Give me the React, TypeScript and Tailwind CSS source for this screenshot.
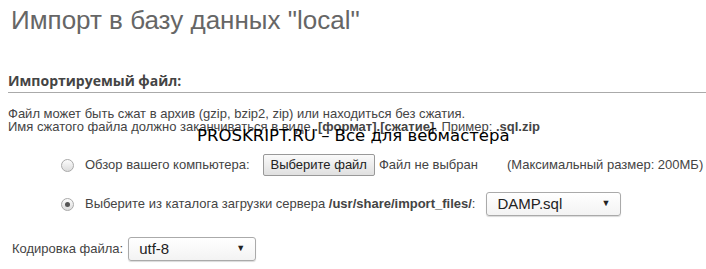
import React from "react";

function Radio({ checked }: { checked?: boolean }) {
    return (
        <span className="relative inline-block h-[13px] w-[13px] shrink-0 rounded-full border border-[#a9a9a9] bg-gradient-to-b from-[#fcfcfc] to-[#dcdcdc]">
            {checked && (
                <span className="absolute left-[3px] top-[3px] h-[5px] w-[5px] rounded-full bg-[#555]" />
            )}
        </span>
    );
}

function Select({ value, width }: { value: string; width: string }) {
    return (
        <div
            className={
                "flex h-[24px] shrink-0 items-center justify-between rounded-[3px] border border-[#aaa] bg-gradient-to-b from-white to-[#f3f3f3] pl-[10px] pr-[10px] text-[15px] text-[#222] shadow-[0_1px_1px_rgba(0,0,0,0.15)] " +
                width
            }
        >
            <span>{value}</span>
            <span className="text-[9px] text-[#222]">▼</span>
        </div>
    );
}

export default function App() {
    return (
        <div className="relative h-[269px] w-[706px] overflow-hidden whitespace-nowrap bg-white font-['Liberation_Sans',Arial,sans-serif] text-[#444]">
            <h1 className="pl-[11px] pt-[3px] text-[26px] leading-[34px] text-[#666]">
                Импорт в базу данных "local"
            </h1>

            <div className="mt-[35px] ml-[8px] border-b border-[#aaa] pb-[2px]">
                <h2 className="font-['Open_Sans',sans-serif] text-[14px] font-bold leading-[18px] text-[#444]">
                    Импортируемый файл:
                </h2>
            </div>

            <div className="mt-[14px] ml-[8px] text-[13px] leading-[13px]">
                <p>Файл может быть сжат в архив (gzip, bzip2, zip) или находиться без сжатия.</p>
                <p>
                    Имя сжатого файла должно заканчиваться в виде <b>.[формат].[сжатие]</b>. Пример: <b>.sql.zip</b>
                </p>
            </div>

            <div className="ml-[61px] mt-[21px] flex h-[22px] items-center text-[13px]">
                <Radio />
                <span className="ml-[11px]">Обзор вашего компьютера:</span>
                <button className="ml-[13px] h-[22px] shrink-0 rounded-[2px] border border-[#999] bg-gradient-to-b from-[#fafafa] to-[#e0e0e0] px-[7px] text-[13px] leading-[20px] text-[#222]">
                    Выберите файл
                </button>
                <span className="ml-[4px]">Файл не выбран</span>
                <span className="ml-[29px]">(Максимальный размер: 200МБ)</span>
            </div>

            <div className="ml-[61px] mt-[16px] flex h-[24px] items-center text-[13px]">
                <Radio checked />
                <span className="ml-[11px]">
                    Выберите из каталога загрузки сервера <b>/usr/share/import_files/</b>:
                </span>
                <Select value="DAMP.sql" width="ml-[11px] w-[135px]" />
            </div>

            <div className="ml-[12px] mt-[21px] flex h-[24px] items-center text-[13px]">
                <span>Кодировка файла:</span>
                <Select value="utf-8" width="ml-[5px] w-[128px]" />
            </div>

            <div className="absolute left-[197px] top-[125px] font-['DejaVu_Sans',sans-serif] text-[16.5px] leading-[22px] text-black">
                PROSKRIPT.RU – Все для вебмастера
            </div>
        </div>
    );
}
